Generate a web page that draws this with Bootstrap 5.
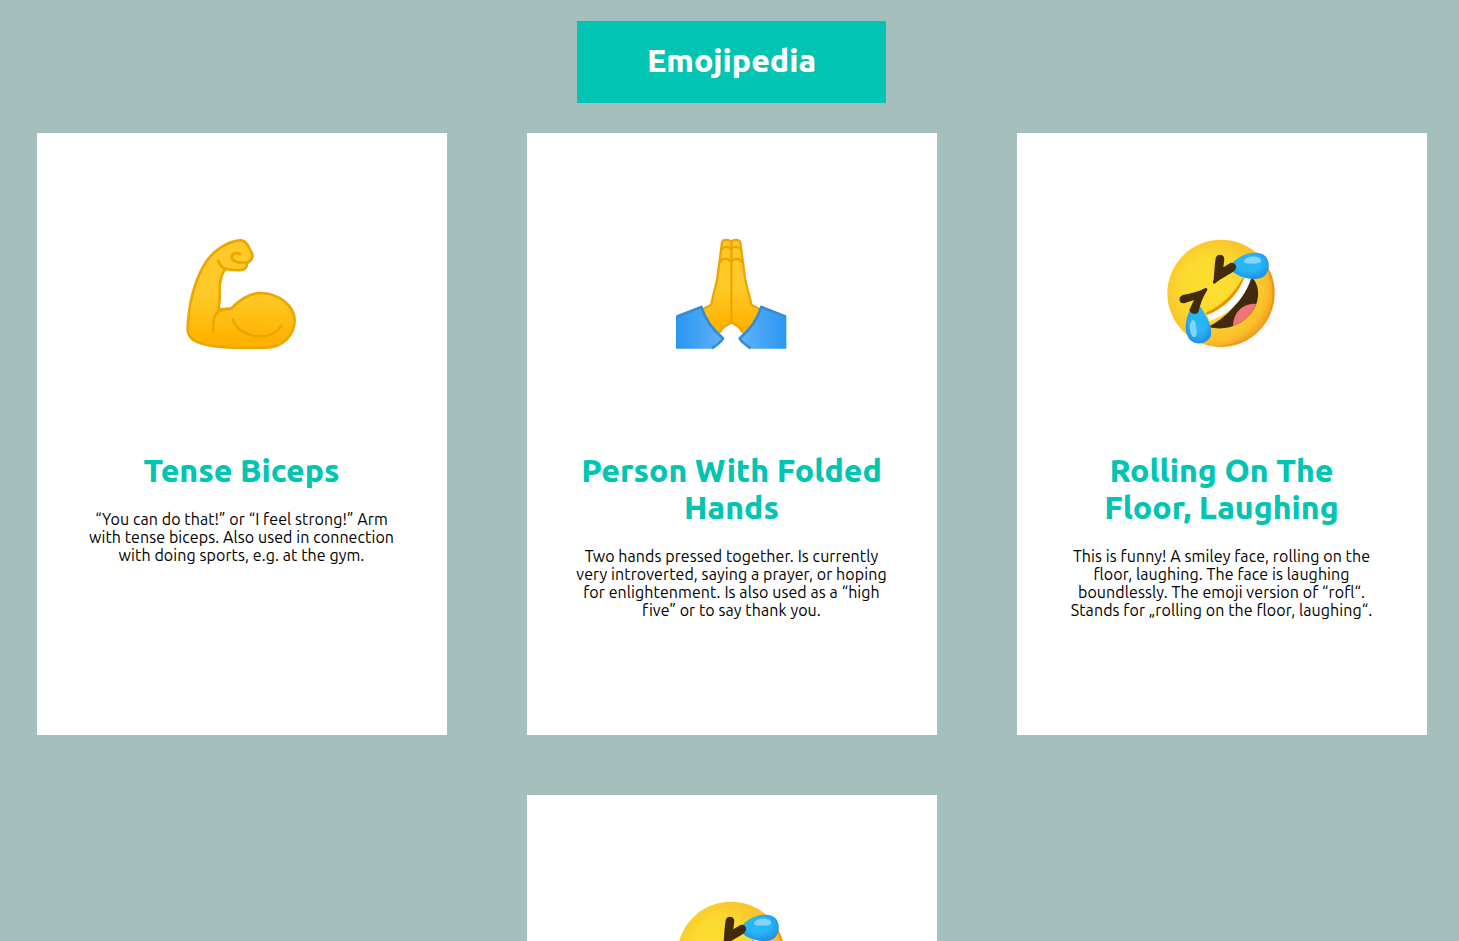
<!DOCTYPE html>
<html lang="en">
<head>
<meta charset="utf-8">
<meta name="viewport" content="width=device-width, initial-scale=1">
<title>Emojipedia</title>
<link href="https://cdn.jsdelivr.net/npm/bootstrap@5.3.0/dist/css/bootstrap.min.css" rel="stylesheet">
<style>
body{background:#a5bfbc;font-family:Ubuntu,"Noto Sans",sans-serif;height:941px;overflow:hidden;color:#000}
.page-head{width:309px;height:82px;margin-top:21px;margin-left:577px;background:#02c4b2;color:#fff}
.page-head h1{font-size:32px;line-height:37px;font-weight:800;padding-top:21px;margin:0}
.dictionary{column-gap:80px;row-gap:60px;margin-top:30px;padding-left:5px}
.term{width:410px;height:602px;padding:95px 41px 0 40px;background:#fff}
.term svg{width:130px;height:130px;margin:0 1px 94px 0}
.term h2{font-size:32px;line-height:37px;font-weight:800;color:#02c4b2;margin-bottom:21px}
.term p{font-size:16px;line-height:18px;letter-spacing:.085px;white-space:nowrap}
</style>
</head>
<body>
<header class="page-head text-center"><h1>Emojipedia</h1></header>
<svg width="0" height="0" class="position-absolute" aria-hidden="true">
<defs>
<linearGradient id="skin" x1="0" y1="0" x2="0" y2="1"><stop offset=".5" stop-color="#ffca28"/><stop offset=".92" stop-color="#ffb300"/></linearGradient>
<linearGradient id="sleeveL"><stop offset="0" stop-color="#2a97f4"/><stop offset=".35" stop-color="#3a9ff5"/><stop offset="1" stop-color="#62b3f7"/></linearGradient>
<linearGradient id="sleeveR"><stop offset="0" stop-color="#62b3f7"/><stop offset=".5" stop-color="#46a4f5"/><stop offset="1" stop-color="#2a97f4"/></linearGradient>
<radialGradient id="face" cx=".42" cy=".44" r=".58"><stop offset="0" stop-color="#fde030"/><stop offset=".5" stop-color="#fcd92f"/><stop offset=".88" stop-color="#f9bf2b"/><stop offset="1" stop-color="#f4a223"/></radialGradient>
<radialGradient id="tear" cx=".5" cy=".4" r=".65"><stop offset=".45" stop-color="#29b6f6"/><stop offset="1" stop-color="#1e88e5"/></radialGradient>
<clipPath id="mouthClip"><path d="M285 148C309 163 315 211 292 247C260 293 211 310 156 297C215 268 259 216 285 148Z"/></clipPath>
<symbol id="rofl" viewBox="0 0 390 390">
<circle cx="195" cy="196" r="161" fill="url(#face)"/>
<path d="M317 92C369 150 366 235 319 292C277 344 220 359 174 354C240 352 292 331 326 281C362 225 356 149 317 92Z" fill="#eb8f00" opacity=".8"/>
<path d="M152 258C201 235 237 202 264 151" fill="none" stroke="#eb8f00" stroke-width="9"/>
<path d="M285 148C309 163 315 211 292 247C260 293 211 310 156 297C215 268 259 216 285 148Z" fill="#422b0d"/>
<path d="M231 300C229 258 256 227 296 227L320 235L300 300Z" fill="#ed7770" clip-path="url(#mouthClip)"/>
<path d="M265 149L286 150C266 212 221 259 160 279L153 261C206 240 243 206 265 149Z" fill="#fff"/>
<path d="M218 121C240 82 288 66 320 79C346 92 344 137 317 149C287 160 243 148 218 121Z" fill="url(#tear)"/>
<path d="M263 100C270 84 298 82 312 91C321 101 310 107 295 107C282 104 270 112 263 100Z" fill="#81d4fa"/>
<path d="M107 238C89 266 84 303 95 325C107 354 152 353 164 325C172 301 154 267 133 236Z" fill="url(#tear)"/>
<path d="M109 276C98 283 99 318 112 327C122 329 124 315 121 302C119 288 119 276 109 276Z" fill="#81d4fa"/>
<path d="M179 91C181 77 204 77 205 92L202 118L223 105C237 101 247 117 235 128C219 141 198 148 178 166C170 170 169 161 173 155C175 134 175 114 179 91ZM81 201C105 196 128 191 148 180C155 180 156 185 151 191C140 208 132 230 128 250C122 265 98 256 101 243L114 216L85 226C67 228 66 205 81 201Z" fill="#422b0d"/>
</symbol>
</defs>
</svg>
<main class="dictionary d-flex flex-wrap justify-content-center">
<article class="term text-center">
<svg viewBox="0 0 390 390" fill="none" stroke="#eda600" stroke-width="8" stroke-linecap="round" stroke-linejoin="round"><path d="M35 299C38 232 54 166 82 115C111 63 160 39 191 37C203 36 209 42 215 51L228 76C232 86 229 94 218 102L211 106C215 115 207 125 197 126C180 128 162 125 148 123C132 144 130 167 131 193C133 211 129 229 127 245L165 242C194 212 223 195 253 195C308 196 354 232 356 275C356 324 318 359 268 359H182C136 357 79 355 51 335C39 326 34 315 35 299Z" fill="url(#skin)"/><path d="M127 98C130 111 138 119 150 123M217 102C198 106 180 104 171 96C161 80 175 70 192 78M165 242C129 243 107 252 112 311M170 274C193 337 291 340 315 294"/></svg>
<h2>Tense Biceps</h2>
<p>“You can do that!” or “I feel strong!” Arm<br>with tense biceps. Also used in connection<br>with doing sports, e.g. at the gym.</p>
</article>
<article class="term text-center">
<svg viewBox="0 0 390 390" fill="none" stroke-linejoin="round" stroke-linecap="round"><path d="M196 41C187 33 170 34 168 44L154 150L136 230L106 246L112 290L160 318L174 297L196 284L216 297L231 318L280 290L286 246L256 230L237 150L223 44C220 34 204 33 196 41Z" fill="url(#skin)"/><g stroke="#eda600" stroke-width="7"><path d="M196 41C187 33 170 34 168 44L154 150C149 178 140 204 136 230L113 242M196 41C204 33 220 34 223 44L237 150C242 178 251 204 256 230L278 242M196 41V283C188 292 172 290 163 311M196 283C204 292 220 290 228 311"/><path d="M168 64C172 54 190 54 195 65C202 54 217 54 224 64M164 101C169 90 188 90 195 102C202 90 220 90 227 101"/></g><path d="M30 266L106 237C117 273 142 307 171 331C167 342 151 351 138 362H30Z" fill="url(#sleeveL)"/><path d="M361 266L286 237C275 273 250 307 221 331C225 342 241 351 254 362H361Z" fill="url(#sleeveR)"/><path d="M31 266L106 237C117 273 142 307 171 331C167 342 151 351 138 361M360 266L286 237C275 273 250 307 221 331C225 342 241 351 254 361" stroke="#378dd2" stroke-width="8" stroke-linecap="butt"/></svg>
<h2>Person With Folded<br>Hands</h2>
<p>Two hands pressed together. Is currently<br>very introverted, saying a prayer, or hoping<br>for enlightenment. Is also used as a “high<br>five” or to say thank you.</p>
</article>
<article class="term text-center">
<svg><use href="#rofl"/></svg>
<h2>Rolling On The<br>Floor, Laughing</h2>
<p>This is funny! A smiley face, rolling on the<br>floor, laughing. The face is laughing<br>boundlessly. The emoji version of “rofl“.<br>Stands for „rolling on the floor, laughing“.</p>
</article>
<article class="term text-center">
<svg><use href="#rofl"/></svg>
</article>
</main>
<script src="https://cdn.jsdelivr.net/npm/bootstrap@5.3.0/dist/js/bootstrap.bundle.min.js"></script>
</body>
</html>
